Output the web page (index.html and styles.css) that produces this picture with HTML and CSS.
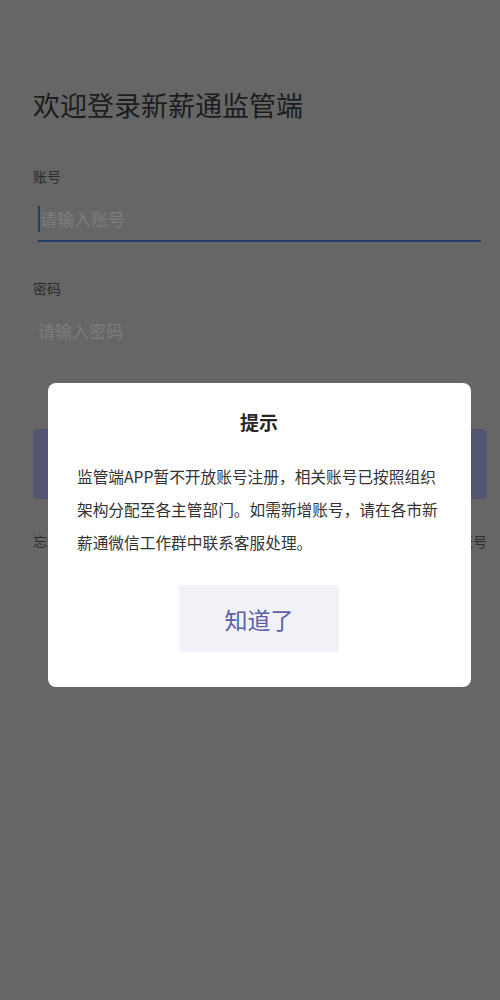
FILE: index.html
```html
<!DOCTYPE html>
<html lang="zh-CN">
<head>
<meta charset="utf-8">
<title>欢迎登录新薪通监管端</title>
<link rel="stylesheet" href="styles.css">
</head>
<body>
<main class="page">
  <h1 class="title">欢迎登录新薪通监管端</h1>
  <div class="field-label">账号</div>
  <div class="input active"><span class="caret"></span><span class="placeholder">请输入账号</span></div>
  <div class="field-label second">密码</div>
  <div class="input"><span class="placeholder">请输入密码</span></div>
  <div class="login-btn"></div>
  <div class="links">
    <span>忘记密码</span>
    <span>注册账号</span>
  </div>
</main>

<div class="mask">
  <div class="dialog">
    <div class="dialog-title">提示</div>
    <p class="dialog-body">监管端APP暂不开放账号注册，相关账号已按照组织架构分配至各主管部门。如需新增账号，请在各市新薪通微信工作群中联系客服处理。</p>
    <div class="dialog-btn">知道了</div>
  </div>
</div>
</body>
</html>
```

FILE: styles.css
```css
html, body {
  margin: 0;
  padding: 0;
}
body {
  background: #666666;
  width: 500px;
  height: 1000px;
  overflow: hidden;
  font-family: "Noto Sans CJK SC", "Noto Sans", sans-serif;
}
.page {
  padding: 87px 13px 0 33px;
}
.title {
  margin: 0;
  font-size: 27px;
  line-height: 35px;
  font-weight: 400;
  color: #1c1c1c;
}
.field-label {
  margin-top: 45px;
  font-size: 14px;
  line-height: 18px;
  color: #2c2c2c;
}
.field-label.second {
  margin-top: 37px;
}
.input {
  margin: 7px 6px 0 5px;
  padding-top: 6px;
  height: 42px;
  line-height: 42px;
  border-bottom: 2px solid transparent;
  display: flex;
  align-items: center;
  font-size: 17px;
}
.input.active {
  border-bottom-color: #1e3c6c;
}
.caret {
  width: 2px;
  height: 26px;
  background: #1e3c6c;
}
.placeholder {
  color: #7d7d7d;
}
.login-btn {
  margin-top: 75px;
  height: 70px;
  border-radius: 5px;
  background: #545573;
}
.links {
  margin-top: 32px;
  display: flex;
  justify-content: space-between;
  font-size: 14px;
  line-height: 20px;
  color: #2c2c2c;
}
.mask {
  position: fixed;
  inset: 0;
}
.dialog {
  position: absolute;
  top: 383px;
  left: 48px;
  width: 423px;
  box-sizing: border-box;
  padding: 26px 30px 35px 29px;
  background: #ffffff;
  border-radius: 8px;
  display: flex;
  flex-direction: column;
  align-items: center;
}
.dialog-title {
  font-size: 19px;
  line-height: 26px;
  font-weight: 700;
  color: #262626;
}
.dialog-body {
  margin: 25px 0 0;
  font-size: 15.7px;
  line-height: 33px;
  color: #333333;
  align-self: stretch;
}
.dialog-btn {
  margin-top: 26px;
  width: 160px;
  height: 67px;
  border-radius: 4px;
  background: #f0f2f7;
  color: #5a5ea6;
  font-size: 23px;
  display: flex;
  align-items: center;
  justify-content: center;
}
```
